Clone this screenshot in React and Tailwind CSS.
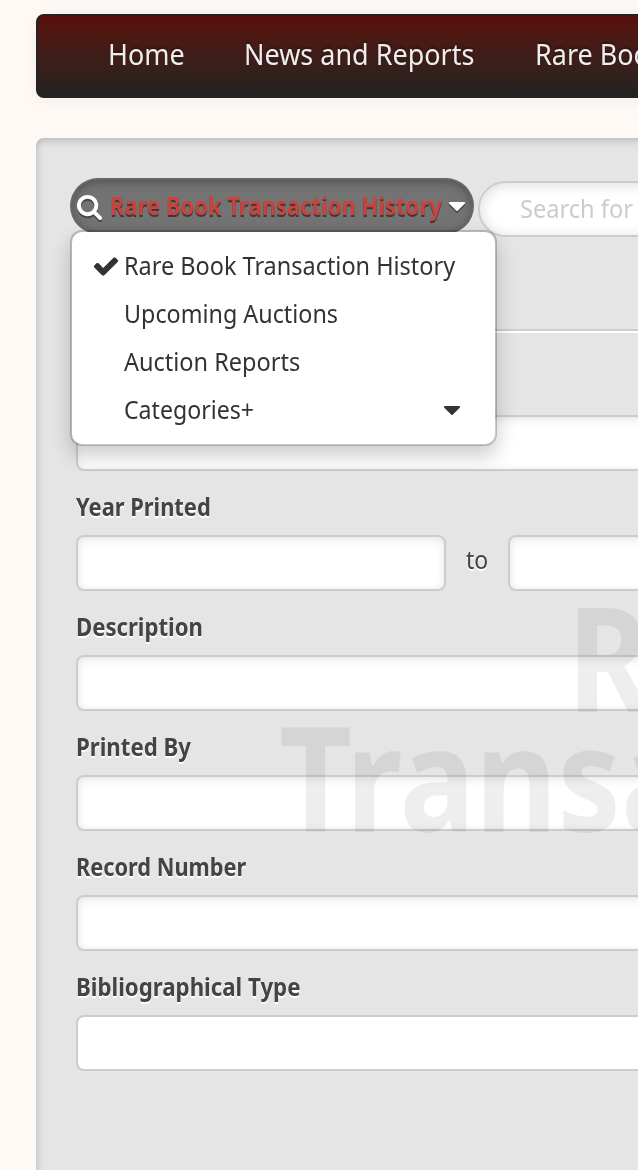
const CHECK = 'M1671 566q0 40-28 68l-724 724-136 136q-28 28-68 28t-68-28l-136-136-362-362q-28-28-28-68t28-68l136-136q28-28 68-28t68 28l294 295 656-657q28-28 68-28t68 28l136 136q28 28 28 68z'
const SEARCH = 'M1152 832q0-185-131.5-316.5t-316.5-131.5-316.5 131.5-131.5 316.5 131.5 316.5 316.5 131.5 316.5-131.5 131.5-316.5zm512 832q0 52-38 90t-90 38q-54 0-90-38l-343-342q-179 124-399 124-143 0-273.5-55.5t-225-150-150-225-55.5-273.5 55.5-273.5 150-225 225-150 273.5-55.5 273.5 55.5 225 150 150 225 55.5 273.5q0 220-124 399l343 343q37 37 37 90z'
const CARET = 'M1408 704q0 26-19 45l-448 448q-19 19-45 19t-45-19l-448-448q-19-19-19-45t19-45 45-19h896q26 0 45 19t19 45z'

const scopes = [
  { name: 'Rare Book Transaction History', scale: 'scale-x-[0.938]', active: true },
  { name: 'Upcoming Auctions', scale: 'scale-x-[0.933]' },
  { name: 'Auction Reports', scale: 'scale-x-[0.94]' },
  { name: 'Categories+', scale: 'scale-x-[0.925]', more: true },
]

function Icon({ d, className }) {
  return (
    <svg viewBox="0 0 1792 1792" fill="currentColor" className={`block shrink-0 ${className || 'size-7'}`}>
      <path d={d} />
    </svg>
  )
}

function NavLink({ children, className }) {
  return (
    <a href="#" className={`block shrink-0 whitespace-nowrap text-[29px] leading-[40px] text-[#eee] origin-left scale-x-[0.93] [text-shadow:0_-2px_2px_rgba(0,0,0,0.3)] ${className || ''}`}>
      {children}
    </a>
  )
}

function Label({ children, scale }) {
  return (
    <label className={`block h-10 leading-[38px] text-[25px] font-bold text-[#444] whitespace-nowrap origin-left ${scale} [text-shadow:0_2px_0_#fff]`}>
      {children}
    </label>
  )
}

function Input({ className, flat }) {
  return (
    <input
      type="text"
      className={`block h-14 shrink-0 rounded-lg border-2 border-[#ccc] bg-white px-3 text-[25px] focus:outline-none ${flat ? '' : 'shadow-[inset_0_2px_10px_rgba(0,0,0,0.11)]'} ${className}`}
    />
  )
}

function Field({ label, scale, flat }) {
  return (
    <div className="h-[120px]">
      <Label scale={scale}>{label}</Label>
      <Input flat={flat} className="mt-2 w-[900px]" />
    </div>
  )
}

function ScopeMenu() {
  return (
    <ul className="absolute left-0 top-[52px] z-20 w-[427px] h-[216px] pt-[10px] rounded-xl border-2 border-black/20 bg-white bg-clip-padding shadow-[0_10px_20px_rgba(0,0,0,0.2)]">
      {scopes.map(s => (
        <li key={s.name} className="flex items-center h-12 pl-5 pr-[29px] text-[25px] text-[#333]">
          <span className="flex w-8 shrink-0">{s.active && <Icon d={CHECK} />}</span>
          <span className={`grow whitespace-nowrap origin-left ${s.scale}`}>{s.name}</span>
          {s.more && <Icon d={CARET} />}
        </li>
      ))}
    </ul>
  )
}

export default function App() {
  return (
    <div className="w-full h-[1170px] overflow-hidden bg-[#fef9f5] pl-9 pt-[14px] font-['Noto_Sans','Open_Sans',sans-serif]">
      <nav className="flex w-[1200px] h-[84px] items-center pl-[70px] pb-1 rounded-lg border-2 border-[#222] bg-linear-to-b from-[#5a0f0a] to-[#222] shadow-[0_2px_20px_rgba(0,0,0,0.05)]">
        <NavLink className="w-[136px]">Home</NavLink>
        <NavLink className="w-[291px]">News and Reports</NavLink>
        <NavLink>Rare Books</NavLink>
      </nav>

      <main className="relative mt-10 w-[1200px] h-[1100px] pt-10 pl-[34px] rounded-lg bg-[#e5e5e5] shadow-[inset_0_2px_8px_rgba(0,0,0,0.22)]">
        <div className="relative flex h-[151px]">
          <button
            type="button"
            className="flex items-center w-[404px] h-14 shrink-0 pl-[5px] rounded-full border-2 border-black/10 bg-[#737373] text-white shadow-[inset_0_2px_8px_rgba(0,0,0,0.3)]"
          >
            <Icon d={SEARCH} className="size-[27px] mr-px drop-shadow-[0_2px_0_rgba(0,0,0,0.4)]" />
            <span className="block w-[333px] ml-[5px] whitespace-nowrap text-left text-[25px] font-bold text-[#c9423c] origin-left scale-x-[0.881] [text-shadow:0_2px_0_rgba(0,0,0,0.5)]">
              Rare Book Transaction History
            </span>
            <Icon d={CARET} className="size-7 drop-shadow-[0_2px_0_rgba(0,0,0,0.4)]" />
          </button>
          <div className="mt-[3px] ml-1 flex items-center w-[600px] h-14 pl-10 rounded-full border-2 border-[#ccc] bg-white shadow-[inset_0_2px_14px_rgba(0,0,0,0.14)]">
            <span className="whitespace-nowrap text-[25px] text-[#ccc] origin-left scale-x-[0.944]">Search for</span>
          </div>
          <ScopeMenu />
        </div>

        <div className="h-1 ml-1.5 border-t-2 border-b-2 border-t-[#ccc] border-b-white" />

        <form className="relative pt-[82px] pl-1.5">
          <Input className="w-[900px]" />
          <div className="mt-4 h-[120px]">
            <Label scale="scale-x-[0.875]">Year Printed</Label>
            <div className="mt-2 flex">
              <Input className="w-[370px]" />
              <span className="w-[62px] pl-5 leading-[49px] text-[25px] text-[#444] [text-shadow:0_2px_0_#fff]">
                <span className="inline-block origin-left scale-x-[0.92]">to</span>
              </span>
              <Input className="w-[370px]" />
            </div>
          </div>
          <Field label="Description" scale="scale-x-[0.885]" />
          <Field label="Printed By" scale="scale-x-[0.888]" />
          <Field label="Record Number" scale="scale-x-[0.87]" />
          <Field label="Bibliographical Type" scale="scale-x-[0.89]" flat />

          {/* watermark over the fields */}
          <div className="pointer-events-none absolute left-[209px] top-[263px] w-[600px] text-[146px] leading-[120px] font-bold text-black/[0.065] whitespace-nowrap">
            <div className="ml-[288px] w-[700px] origin-left scale-x-[0.866]">Rare Book</div>
            <div className="w-[900px] origin-left scale-x-[0.866]">Transaction</div>
          </div>
        </form>
      </main>
    </div>
  )
}
